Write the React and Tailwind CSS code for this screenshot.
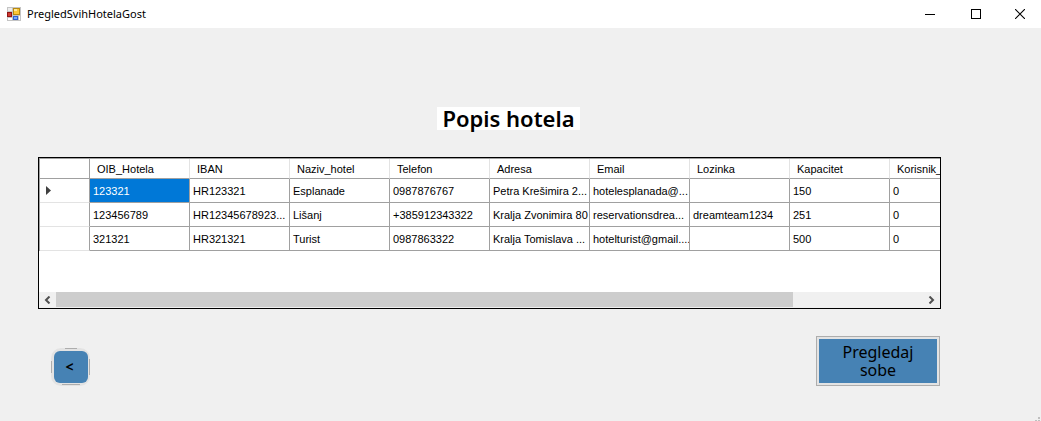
import React from "react";

const columns = [
  "OIB_Hotela",
  "IBAN",
  "Naziv_hotel",
  "Telefon",
  "Adresa",
  "Email",
  "Lozinka",
  "Kapacitet",
  "Korisnik_id",
];

const rows = [
  ["123321", "HR123321", "Esplanade", "0987876767", "Petra Krešimira 2...", "hotelesplanada@...", "", "150", "0"],
  ["123456789", "HR12345678923...", "Lišanj", "+385912343322", "Kralja Zvonimira 80", "reservationsdrea...", "dreamteam1234", "251", "0"],
  ["321321", "HR321321", "Turist", "0987863322", "Kralja Tomislava ...", "hotelturist@gmail....", "", "500", "0"],
];

function FormIcon() {
  return (
    <svg width="14" height="14" viewBox="0 0 14 14" shapeRendering="crispEdges" aria-hidden="true">
      <rect width="14" height="14" fill="#c4c4c4" />
      <rect x="1" y="1" width="4" height="3" fill="#ececec" />
      <rect x="1" y="11" width="4" height="2" fill="#fff" />
      <rect x="12" y="9" width="1" height="4" fill="#fff" />
      <rect x="6" y="1" width="7" height="7" fill="#b98a10" />
      <rect x="7" y="2" width="5" height="5" fill="#fbc737" />
      <rect x="7" y="2" width="3" height="2" fill="#ffe79a" />
      <rect x="0" y="5" width="5" height="5" fill="#8f1515" />
      <rect x="1" y="6" width="3" height="3" fill="#d0392e" />
      <rect x="6" y="9" width="5" height="4" fill="#2f62cf" />
      <rect x="7" y="10" width="3" height="2" fill="#79a8ff" />
    </svg>
  );
}

function TitleBar() {
  return (
    <header className="flex h-7 items-center bg-white pl-[7px]">
      <FormIcon />
      <span className="ml-1.5 grow font-['Noto_Sans',sans-serif] text-[11px] leading-4">PregledSvihHotelaGost</span>
      <button aria-label="Minimize" className="flex h-6 w-[46px] items-center justify-center">
        <svg width="10" height="10" shapeRendering="crispEdges"><path d="M0 5.5H10" stroke="#000" /></svg>
      </button>
      <button aria-label="Maximize" className="flex h-6 w-[46px] items-center justify-center">
        <svg width="10" height="10" shapeRendering="crispEdges"><rect x=".5" y=".5" width="9" height="9" fill="none" stroke="#000" /></svg>
      </button>
      <button aria-label="Close" className="flex h-6 w-[42px] items-center justify-center">
        <svg width="10" height="10"><path d="M0 0L10 10M10 0L0 10" stroke="#000" strokeWidth="1.1" /></svg>
      </button>
    </header>
  );
}

function HotelGrid() {
  return (
    <div className="ml-[38px] mr-[100px] mt-[27px] flex h-[152px] flex-col overflow-hidden border border-black bg-white">
      <div className="grow overflow-hidden border-t border-[#a0a0a0] font-['Liberation_Sans',sans-serif] text-[11px] leading-4">
        <table className="w-[951px] table-fixed border-separate border-spacing-0 border-l border-[#a0a0a0] text-left">
          <colgroup>
            <col className="w-[50px]" />
            {columns.map((c) => <col key={c} className="w-[100px]" />)}
          </colgroup>
          <thead>
            <tr className="h-5">
              <th aria-label="Row" className="border-b border-r border-b-[#a0a0a0] border-r-[#a0a0a0] p-0" />
              {columns.map((c) => (
                <th key={c} scope="col" className="border-b border-r border-b-[#a0a0a0] border-r-[#e3e3e3] p-0 pl-[7px] font-normal">{c}</th>
              ))}
            </tr>
          </thead>
          <tbody>
            {rows.map((row, r) => (
              <tr key={row[0]} className="h-6">
                <th scope="row" aria-label={row[0]} className="border-b border-r border-b-[#e3e3e3] border-r-[#a0a0a0] p-0 pl-1.5">
                  {r === 0 && (
                    <svg width="5" height="9" aria-hidden="true"><path d="M0 0L5 4.5L0 9Z" fill="#404040" /></svg>
                  )}
                </th>
                {row.map((value, c) => (
                  <td
                    key={c}
                    className={
                      "overflow-hidden whitespace-nowrap border-b border-r border-[#a0a0a0] p-0 pl-[3px] " +
                      (r === 0 && c === 0 ? "bg-[#0078d7] text-white" : "")
                    }
                  >
                    {value}
                  </td>
                ))}
              </tr>
            ))}
          </tbody>
        </table>
      </div>
      <div className="flex h-4 shrink-0 bg-[#f0f0f0]">
        <button aria-label="Scroll left" className="flex w-[17px] items-center justify-center">
          <svg width="7" height="8"><path d="M5.5 .5L2 4L5.5 7.5" fill="none" stroke="#505050" strokeWidth="2" /></svg>
        </button>
        <div className="grow">
          <div className="h-[15px] w-[85%] bg-[#cdcdcd]" />
        </div>
        <button aria-label="Scroll right" className="flex w-[17px] items-center justify-center">
          <svg width="7" height="8"><path d="M1.5 .5L5 4L1.5 7.5" fill="none" stroke="#505050" strokeWidth="2" /></svg>
        </button>
      </div>
    </div>
  );
}

export default function App() {
  return (
    <div className="relative flex min-h-screen flex-col bg-[#f0f0f0] text-black">
      <TitleBar />
      <main>
        <div className="mr-6 mt-[79px] flex justify-center">
          <h1 className="bg-white px-[5px] font-['Noto_Sans',sans-serif] text-[22px] font-semibold leading-[23px]">
            Popis hotela
          </h1>
        </div>
        <HotelGrid />
        <div className="ml-[51px] mr-[101px] mt-[27px] flex items-end justify-between font-['Noto_Sans',sans-serif]">
          <button aria-label="Natrag" className="relative flex h-[38px] w-[39px] items-center justify-center rounded-[10px] bg-[#e3e3e3]">
            <svg className="absolute inset-0" width="39" height="38" shapeRendering="crispEdges" aria-hidden="true">
              <path d="M14 .5H26M11 36.5H29M.5 13V25M38.5 11V27" stroke="#adadad" />
            </svg>
            <span className="relative flex h-8 w-[34px] items-center justify-center rounded-md bg-[#4682b4] pr-0.5 text-sm font-bold leading-4">&lt;</span>
          </button>
          <button className="h-[50px] w-[124px] border border-[#adadad] bg-[#e3e3e3] p-0.5">
            <span className="flex h-full items-center justify-center bg-[#4682b4] px-4 text-base leading-[18px]">
              Pregledaj sobe
            </span>
          </button>
        </div>
      </main>
      <svg className="absolute bottom-0 right-0" width="6" height="4" shapeRendering="crispEdges" aria-hidden="true">
        <path d="M3 0h2v2h-2zM0 3h2v1h-2zM3 3h2v1h-2z" fill="#bfbfbf" />
      </svg>
    </div>
  );
}
